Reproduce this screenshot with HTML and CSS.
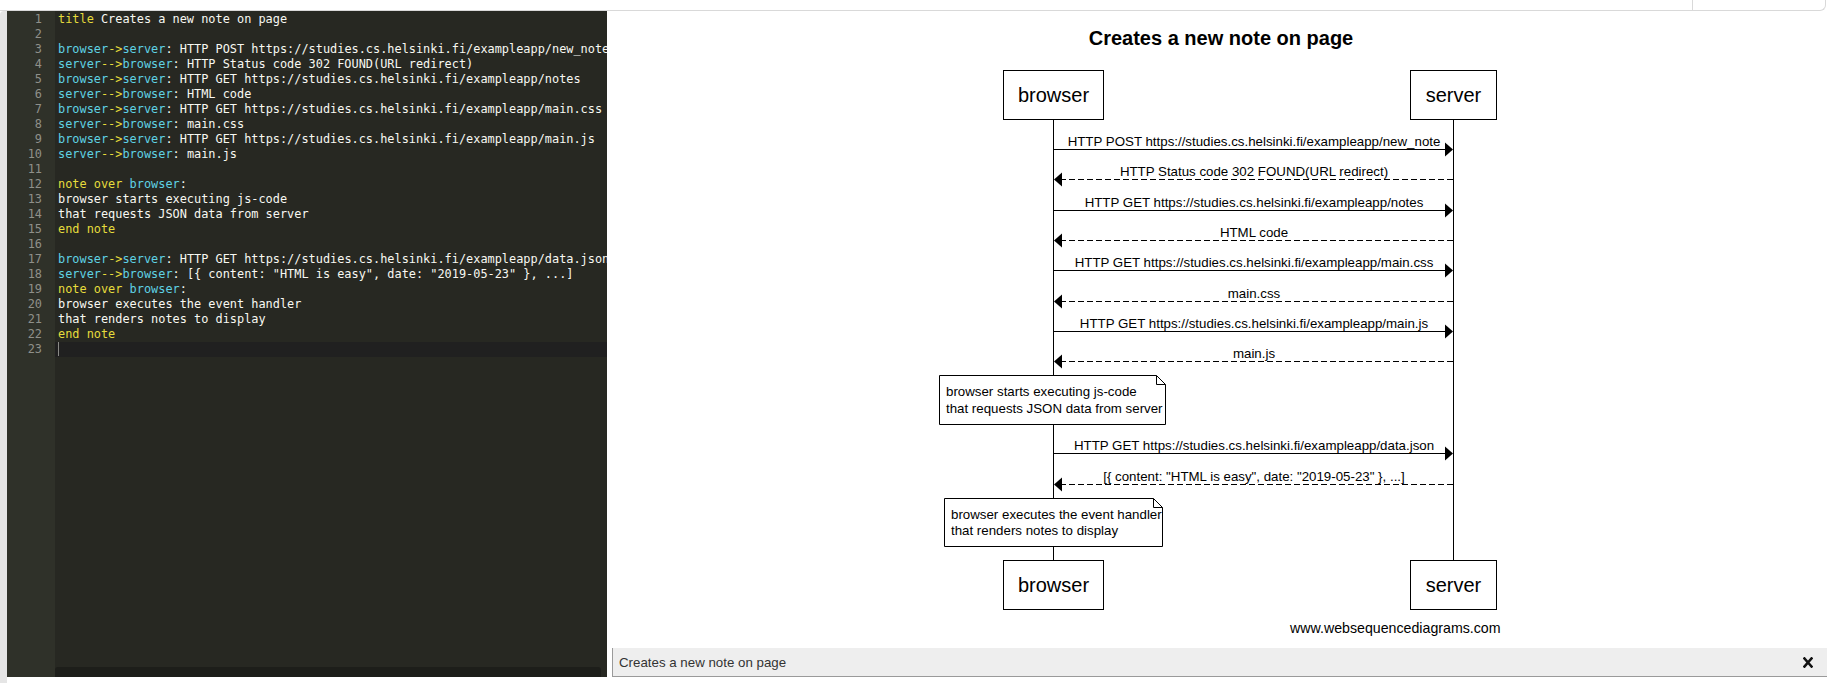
FILE: index.html
```html
<!DOCTYPE html>
<html>
<head>
<meta charset="utf-8">
<link rel="stylesheet" href="styles.css">
</head>
<body>
<div class="topbar">
  <div class="tb-main"></div>
  <div class="tb-right"></div>
</div>
<div class="main">
  <div class="leftstrip"></div>
  <div class="editor">
    <div class="gutter">
      <div>1</div><div>2</div><div>3</div><div>4</div><div>5</div><div>6</div><div>7</div><div>8</div><div>9</div><div>10</div><div>11</div><div>12</div><div>13</div><div>14</div><div>15</div><div>16</div><div>17</div><div>18</div><div>19</div><div>20</div><div>21</div><div>22</div><div>23</div>
    </div>
    <div class="code">
      <div class="lines">
        <div class="ln"><span class="kw">title</span> Creates a new note on page</div>
        <div class="ln"> </div>
        <div class="ln"><span class="id">browser</span><span class="op">-&gt;</span><span class="id">server</span>: HTTP POST https://studies.cs.helsinki.fi/exampleapp/new_note</div>
        <div class="ln"><span class="id">server</span><span class="op">--&gt;</span><span class="id">browser</span>: HTTP Status code 302 FOUND(URL redirect)</div>
        <div class="ln"><span class="id">browser</span><span class="op">-&gt;</span><span class="id">server</span>: HTTP GET https://studies.cs.helsinki.fi/exampleapp/notes</div>
        <div class="ln"><span class="id">server</span><span class="op">--&gt;</span><span class="id">browser</span>: HTML code</div>
        <div class="ln"><span class="id">browser</span><span class="op">-&gt;</span><span class="id">server</span>: HTTP GET https://studies.cs.helsinki.fi/exampleapp/main.css</div>
        <div class="ln"><span class="id">server</span><span class="op">--&gt;</span><span class="id">browser</span>: main.css</div>
        <div class="ln"><span class="id">browser</span><span class="op">-&gt;</span><span class="id">server</span>: HTTP GET https://studies.cs.helsinki.fi/exampleapp/main.js</div>
        <div class="ln"><span class="id">server</span><span class="op">--&gt;</span><span class="id">browser</span>: main.js</div>
        <div class="ln"> </div>
        <div class="ln"><span class="kw">note over</span> <span class="id">browser</span>:</div>
        <div class="ln">browser starts executing js-code</div>
        <div class="ln">that requests JSON data from server</div>
        <div class="ln"><span class="kw">end note</span></div>
        <div class="ln"> </div>
        <div class="ln"><span class="id">browser</span><span class="op">-&gt;</span><span class="id">server</span>: HTTP GET https://studies.cs.helsinki.fi/exampleapp/data.json</div>
        <div class="ln"><span class="id">server</span><span class="op">--&gt;</span><span class="id">browser</span>: [{ content: "HTML is easy", date: "2019-05-23" }, ...]</div>
        <div class="ln"><span class="kw">note over</span> <span class="id">browser</span>:</div>
        <div class="ln">browser executes the event handler</div>
        <div class="ln">that renders notes to display</div>
        <div class="ln"><span class="kw">end note</span></div>
        <div class="ln active"><span class="cursor"></span></div>
      </div>
      <div class="hscroll"></div>
    </div>
  </div>
  <div class="preview">
    <svg class="diagram" width="1220" height="637" viewBox="607 11 1220 637" xmlns="http://www.w3.org/2000/svg">
      <g font-family="Liberation Sans, Arial, sans-serif" fill="#000">
        <text x="1221" y="45" font-size="20" font-weight="bold" text-anchor="middle">Creates a new note on page</text>

        <g stroke="#000" stroke-width="1" fill="none">
          <line x1="1053.5" y1="119" x2="1053.5" y2="560"/>
          <line x1="1453.5" y1="119" x2="1453.5" y2="560"/>
        </g>

        <g stroke="#000" stroke-width="1" fill="#fff">
          <rect x="1003.5" y="70.5" width="100" height="49"/>
          <rect x="1410.5" y="70.5" width="86" height="49"/>
          <rect x="1003.5" y="560.5" width="100" height="49"/>
          <rect x="1410.5" y="560.5" width="86" height="49"/>
        </g>
        <g font-size="20" text-anchor="middle">
          <text x="1053.5" y="101.5">browser</text>
          <text x="1453.5" y="101.5">server</text>
          <text x="1053.5" y="591.5">browser</text>
          <text x="1453.5" y="591.5">server</text>
        </g>

        <g stroke="#000" stroke-width="1">
          <line x1="1053.5" y1="149.5" x2="1446" y2="149.5"/>
          <line x1="1453" y1="179.5" x2="1061" y2="179.5" stroke-dasharray="6 3"/>
          <line x1="1053.5" y1="210.5" x2="1446" y2="210.5"/>
          <line x1="1453" y1="240.5" x2="1061" y2="240.5" stroke-dasharray="6 3"/>
          <line x1="1053.5" y1="270.5" x2="1446" y2="270.5"/>
          <line x1="1453" y1="301.5" x2="1061" y2="301.5" stroke-dasharray="6 3"/>
          <line x1="1053.5" y1="331.5" x2="1446" y2="331.5"/>
          <line x1="1453" y1="361.5" x2="1061" y2="361.5" stroke-dasharray="6 3"/>
          <line x1="1053.5" y1="453.5" x2="1446" y2="453.5"/>
          <line x1="1453" y1="484.5" x2="1061" y2="484.5" stroke-dasharray="6 3"/>
        </g>
        <g fill="#000">
          <polygon points="1445,142.5 1453,149.5 1445,156.5"/>
          <polygon points="1062,172.5 1054,179.5 1062,186.5"/>
          <polygon points="1445,203.5 1453,210.5 1445,217.5"/>
          <polygon points="1062,233.5 1054,240.5 1062,247.5"/>
          <polygon points="1445,263.5 1453,270.5 1445,277.5"/>
          <polygon points="1062,294.5 1054,301.5 1062,308.5"/>
          <polygon points="1445,324.5 1453,331.5 1445,338.5"/>
          <polygon points="1062,354.5 1054,361.5 1062,368.5"/>
          <polygon points="1445,446.5 1453,453.5 1445,460.5"/>
          <polygon points="1062,477.5 1054,484.5 1062,491.5"/>
        </g>
        <g font-size="13.3" text-anchor="middle">
          <text x="1254" y="146">HTTP POST https://studies.cs.helsinki.fi/exampleapp/new_note</text>
          <text x="1254" y="176">HTTP Status code 302 FOUND(URL redirect)</text>
          <text x="1254" y="207">HTTP GET https://studies.cs.helsinki.fi/exampleapp/notes</text>
          <text x="1254" y="237">HTML code</text>
          <text x="1254" y="267">HTTP GET https://studies.cs.helsinki.fi/exampleapp/main.css</text>
          <text x="1254" y="298">main.css</text>
          <text x="1254" y="328">HTTP GET https://studies.cs.helsinki.fi/exampleapp/main.js</text>
          <text x="1254" y="358">main.js</text>
          <text x="1254" y="450">HTTP GET https://studies.cs.helsinki.fi/exampleapp/data.json</text>
          <text x="1254" y="481">[{ content: "HTML is easy", date: "2019-05-23" }, ...]</text>
        </g>

        <g stroke="#000" stroke-width="1" fill="#fff">
          <path d="M939.5 375.5 H1156.5 L1165.5 384.5 V424.5 H939.5 Z"/>
          <path d="M1156.5 375.5 V384.5 H1165.5" fill="none"/>
          <path d="M944.5 498.5 H1153.5 L1162.5 507.5 V546.5 H944.5 Z"/>
          <path d="M1153.5 498.5 V507.5 H1162.5" fill="none"/>
        </g>
        <g font-size="13.3">
          <text x="946" y="396">browser starts executing js-code</text>
          <text x="946" y="412.5">that requests JSON data from server</text>
          <text x="951" y="518.5">browser executes the event handler</text>
          <text x="951" y="535">that renders notes to display</text>
        </g>

        <text x="1290" y="633" font-size="14.2">www.websequencediagrams.com</text>
      </g>
    </svg>
    <div class="bar">
      <span class="bar-title">Creates a new note on page</span>
      <svg class="close" width="10" height="11" viewBox="0 0 10 11" xmlns="http://www.w3.org/2000/svg">
        <path d="M1.5 1.5 L8.5 9.5 M8.5 1.5 L1.5 9.5" stroke="#111" stroke-width="2.6" stroke-linecap="square" fill="none"/>
      </svg>
    </div>
  </div>
</div>
</body>
</html>
```

FILE: styles.css
```css
html, body {
  margin: 0;
  padding: 0;
  background: #fff;
}

body {
  width: 1827px;
  height: 683px;
  overflow: hidden;
  font-family: "Liberation Sans", Arial, sans-serif;
}

.topbar {
  display: flex;
  height: 11px;
  width: 1826px;
  box-sizing: border-box;
}

.tb-main {
  width: 1692px;
  border-bottom: 1px solid #d9d9d9;
}

.tb-right {
  flex: 1;
  border-left: 1px solid #d9d9d9;
  border-right: 1px solid #d9d9d9;
  border-bottom: 1px solid #d9d9d9;
  border-bottom-right-radius: 6px;
}

.main {
  display: flex;
  align-items: flex-start;
  height: 672px;
}

.leftstrip {
  width: 7px;
  height: 672px;
  background: #e5e5e5;
  border-top-left-radius: 4px;
}

.editor {
  display: flex;
  width: 600px;
  height: 666px;
  background: #272822;
  font-family: "DejaVu Sans Mono", "Liberation Mono", monospace;
  font-size: 11.9px;
  line-height: 15px;
  overflow: hidden;
}

.gutter {
  width: 48px;
  flex: none;
  background: #2f3129;
  color: #8f908a;
  text-align: right;
  box-sizing: border-box;
  padding-right: 13px;
  padding-top: 1px;
}

.code {
  flex: 1;
  display: flex;
  flex-direction: column;
  justify-content: space-between;
  min-width: 0;
  padding-top: 1px;
}

.lines {
  color: #f8f8f2;
}

.ln {
  white-space: pre;
  padding-left: 3px;
  height: 15px;
}

.ln.active {
  background: #202020;
}

.cursor {
  display: inline-block;
  width: 1px;
  height: 14px;
  background: #8a8a86;
  vertical-align: top;
}

.kw {
  color: #e6dc3c;
}

.id {
  color: #5fd2e4;
}

.op {
  color: #e6dc3c;
}

.hscroll {
  height: 10px;
  margin-right: 6px;
  background: #1d1e1a;
  border-top-left-radius: 3px;
  border-top-right-radius: 3px;
}

.preview {
  width: 1220px;
  display: flex;
  flex-direction: column;
}

.diagram {
  display: block;
}

.bar {
  margin-left: 5px;
  height: 29px;
  box-sizing: border-box;
  background: #eeeeee;
  border-left: 1px solid #9a9a9a;
  border-bottom: 1px solid #9a9a9a;
  display: flex;
  align-items: center;
  justify-content: space-between;
  padding: 0 14px 0 6px;
}

.bar-title {
  font-family: "Liberation Sans", Arial, sans-serif;
  font-size: 13.3px;
  color: #333;
}

.close {
  display: block;
}
```
